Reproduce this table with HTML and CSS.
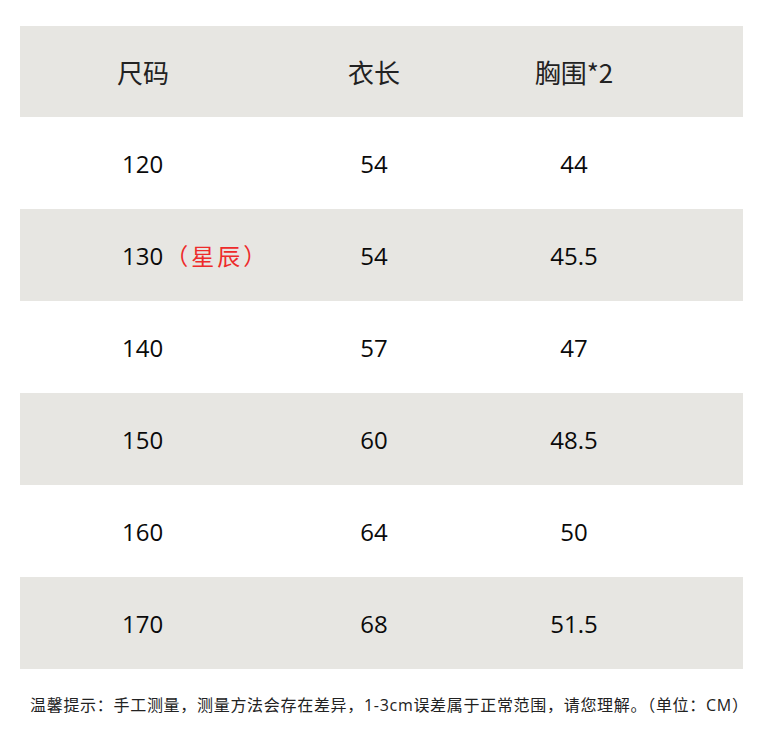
FILE: index.html
```html
<!DOCTYPE html>
<html lang="zh">
<head>
<meta charset="utf-8">
<link rel="stylesheet" href="styles.css">
</head>
<body>
<div class="page">
  <div class="table">
    <div class="row head">
      <div class="c1 h1">尺码</div><div class="c">衣长</div><div class="c">胸围*2</div>
    </div>
    <div class="row">
      <div class="c1">120</div><div class="c">54</div><div class="c">44</div>
    </div>
    <div class="row gray">
      <div class="c1">130<span class="red">（星辰）</span></div><div class="c">54</div><div class="c">45.5</div>
    </div>
    <div class="row">
      <div class="c1">140</div><div class="c">57</div><div class="c">47</div>
    </div>
    <div class="row gray">
      <div class="c1">150</div><div class="c">60</div><div class="c">48.5</div>
    </div>
    <div class="row">
      <div class="c1">160</div><div class="c">64</div><div class="c">50</div>
    </div>
    <div class="row gray">
      <div class="c1">170</div><div class="c">68</div><div class="c">51.5</div>
    </div>
  </div>
  <p class="note">温馨提示：手工测量，测量方法会存在差异，1-3cm误差属于正常范围，请您理解。（单位：CM）</p>
</div>
</body>
</html>
```
FILE: styles.css
```css
html, body {
  margin: 0;
  padding: 0;
  background: #fff;
}
.page {
  padding: 26px 20px 0 20px;
  width: 723px;
  font-family: "Open Sans", "Noto Sans CJK SC", sans-serif;
  color: #0a0a0a;
}
.table {
  display: flex;
  flex-direction: column;
}
.row {
  display: grid;
  grid-template-columns: 254px 200px 200px 1fr;
  align-items: center;
  height: 92px;
  font-size: 24px;
}
.row.head, .row.gray {
  background: #e7e6e2;
}
.row.head {
  height: 91px;
  font-size: 26px;
  color: #222;
}
.row.head .c {
  font-family: "Noto Sans CJK SC", "Open Sans", sans-serif;
}
.c1 {
  padding-left: 102px;
  white-space: nowrap;
}
.c1.h1 {
  padding-left: 97px;
  font-family: "Noto Sans CJK SC", sans-serif;
}
.c {
  text-align: center;
}
.red {
  color: #ee2b2b;
  font-family: "Noto Sans CJK SC", sans-serif;
  font-size: 23px;
  letter-spacing: 3px;
  padding-left: 2px;
}
.note {
  margin: 23px 0 0 10px;
  font-size: 16px;
  color: #222;
  white-space: nowrap;
  letter-spacing: 0.7px;
}
```
